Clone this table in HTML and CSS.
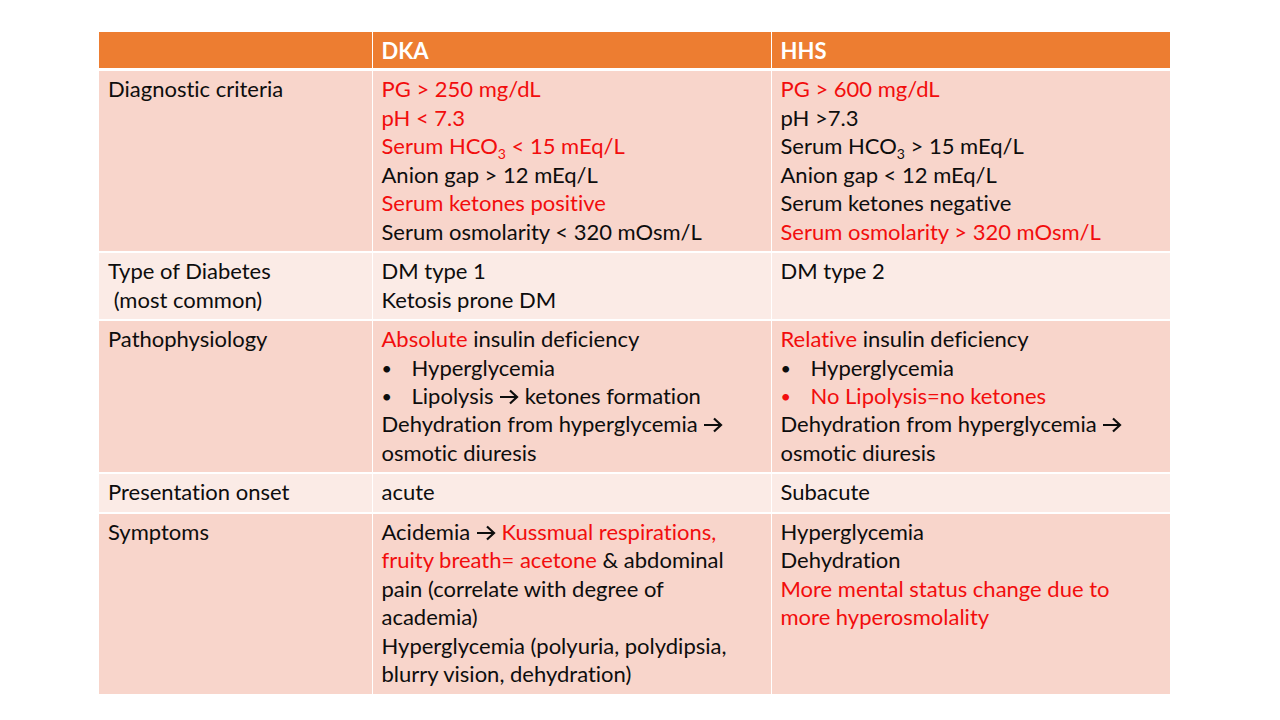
FILE: index.html
```html
<!DOCTYPE html>
<html>
<head>
<meta charset="utf-8">
<link rel="stylesheet" href="styles.css">
</head>
<body>
<div class="slide">
<table class="cmp">
  <colgroup><col class="c1"><col class="c2"><col class="c3"></colgroup>
  <thead>
    <tr><th></th><th>DKA</th><th>HHS</th></tr>
  </thead>
  <tbody>
    <tr class="dark">
      <td>Diagnostic criteria</td>
      <td>
        <div class="r">PG &gt; 250 mg/dL</div>
        <div class="r">pH &lt; 7.3</div>
        <div class="r">Serum HCO<sub>3</sub> &lt; 15 mEq/L</div>
        <div>Anion gap &gt; 12 mEq/L</div>
        <div class="r">Serum ketones positive</div>
        <div>Serum osmolarity &lt; 320 mOsm/L</div>
      </td>
      <td>
        <div class="r">PG &gt; 600 mg/dL</div>
        <div>pH &gt;7.3</div>
        <div>Serum HCO<sub>3</sub> &gt; 15 mEq/L</div>
        <div>Anion gap &lt; 12 mEq/L</div>
        <div>Serum ketones negative</div>
        <div class="r">Serum osmolarity &gt; 320 mOsm/L</div>
      </td>
    </tr>
    <tr class="light">
      <td>Type of Diabetes<br>&nbsp;(most common)</td>
      <td><div>DM type 1</div><div>Ketosis prone DM</div></td>
      <td><div>DM type 2</div></td>
    </tr>
    <tr class="dark">
      <td>Pathophysiology</td>
      <td>
        <div><span class="r">Absolute</span> insulin deficiency</div>
        <div class="li"><span class="b">•</span><span>Hyperglycemia</span></div>
        <div class="li"><span class="b">•</span><span>Lipolysis <svg class="ar" viewBox="0 0 20 16"><path d="M1 8H18M11 1.5L18 8L11 14.5"/></svg> ketones formation</span></div>
        <div>Dehydration from hyperglycemia <svg class="ar" viewBox="0 0 20 16"><path d="M1 8H18M11 1.5L18 8L11 14.5"/></svg><br>osmotic diuresis</div>
      </td>
      <td>
        <div><span class="r">Relative</span> insulin deficiency</div>
        <div class="li"><span class="b">•</span><span>Hyperglycemia</span></div>
        <div class="li r"><span class="b">•</span><span>No Lipolysis=no ketones</span></div>
        <div>Dehydration from hyperglycemia <svg class="ar" viewBox="0 0 20 16"><path d="M1 8H18M11 1.5L18 8L11 14.5"/></svg><br>osmotic diuresis</div>
      </td>
    </tr>
    <tr class="light">
      <td>Presentation onset</td>
      <td>acute</td>
      <td>Subacute</td>
    </tr>
    <tr class="dark">
      <td>Symptoms</td>
      <td>
        <div>Acidemia <svg class="ar" viewBox="0 0 20 16"><path d="M1 8H18M11 1.5L18 8L11 14.5"/></svg> <span class="r">Kussmual respirations,<br>fruity breath= acetone</span> &amp; abdominal<br>pain (correlate with degree of<br>academia)</div>
        <div>Hyperglycemia (polyuria, polydipsia,<br>blurry vision, dehydration)</div>
      </td>
      <td>
        <div>Hyperglycemia</div>
        <div>Dehydration</div>
        <div class="r">More mental status change due to<br>more hyperosmolality</div>
      </td>
    </tr>
  </tbody>
</table>
</div>
</body>
</html>
```

FILE: styles.css
```css
html, body {
  margin: 0;
  padding: 0;
  background: #ffffff;
}
.slide {
  width: 1280px;
  height: 720px;
  padding: 32px 0 0 99px;
  box-sizing: border-box;
}
.cmp {
  border-collapse: collapse;
  table-layout: fixed;
  width: 1071px;
  font-family: Lato, "Open Sans", sans-serif;
  font-size: 22px;
  line-height: 28.45px;
  font-variant-ligatures: none;
  color: #0d0d0d;
}
.c1 { width: 273px; }
.c2 { width: 399px; }
.c3 { width: 399px; }
.cmp th, .cmp td {
  text-align: left;
  vertical-align: top;
  padding: 4px 9px 5px 9px;
  white-space: nowrap;
  border-left: 1px solid #ffffff;
  border-right: 1px solid #ffffff;
  border-bottom: 2px solid #ffffff;
}
.cmp th {
  background: #ed7d31;
  color: #ffffff;
  font-weight: bold;
  height: 25px;
  padding-top: 5px;
  padding-bottom: 3px;
  border-bottom: 3px solid #ffffff;
}
.cmp tr > :first-child { border-left: none; }
.cmp tr > :last-child { border-right: none; }
.dark td { background: #f8d5cb; }
.light td { background: #fbebe6; }
.r { color: #f20d0d; }
sub {
  font-size: 14px;
  line-height: 0;
  vertical-align: -5px;
}
.li { display: flex; }
.b {
  display: inline-block;
  width: 30px;
  flex: none;
  font-size: 18px;
}
.ar {
  width: 20px;
  height: 16px;
  vertical-align: -1px;
  fill: none;
  stroke: #0d0d0d;
  stroke-width: 2.2;
}
```
